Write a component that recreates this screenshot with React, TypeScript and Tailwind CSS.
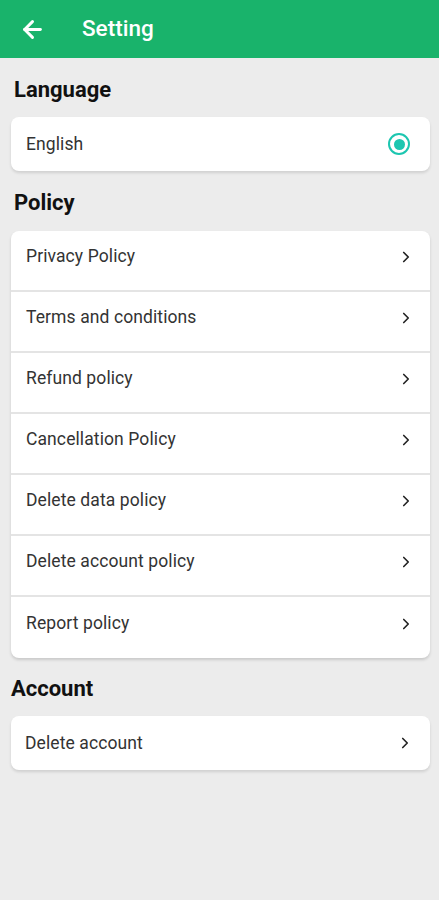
import { ArrowLeft, ChevronRight } from "lucide-react";

const policies = [
  "Privacy Policy",
  "Terms and conditions",
  "Refund policy",
  "Cancellation Policy",
  "Delete data policy",
  "Delete account policy",
  "Report policy",
];

function Row({ label, last }: { label: string; last?: boolean }) {
  return (
    <div
      className={
        "flex h-[61px] items-center justify-between pb-[8px] pl-[15px] pr-[15px] " +
        (last ? "" : "border-b-2 border-[#e4e4e4]")
      }
    >
      <span className="text-[17.5px] tracking-[0.1px] text-[#333]">{label}</span>
      <ChevronRight size={18} strokeWidth={2.2} className="text-[#222]" />
    </div>
  );
}

export default function App() {
  return (
    <div
      className="min-h-[900px] w-full bg-[#ececec]"
      style={{ fontFamily: "Roboto, 'Noto Sans', sans-serif" }}
    >
      {/* top bar */}
      <div className="flex h-[58px] items-center bg-[#19b36b] pl-[19px]">
        <ArrowLeft size={27} strokeWidth={2.6} className="text-white" />
        <span className="ml-[36px] text-[22.5px] font-medium text-white">Setting</span>
      </div>

      <div className="pl-[11px] pr-[9px]">
        <h2 className="mt-[18px] h-[28px] pl-[3px] text-[22px] font-bold leading-[28px] text-[#111]">
          Language
        </h2>
        <div className="mt-[13px] flex h-[54px] items-center justify-between rounded-lg bg-white pl-[15px] pr-[20px] shadow-[0_2px_3px_rgba(0,0,0,0.12)]">
          <span className="text-[17.5px] tracking-[0.1px] text-[#333]">English</span>
          <span className="flex h-[22px] w-[22px] items-center justify-center rounded-full border-[2.5px] border-[#1cc6b0]">
            <span className="h-[11px] w-[11px] rounded-full bg-[#1cc6b0]" />
          </span>
        </div>

        <h2 className="mt-[18px] h-[28px] pl-[3px] text-[22px] font-bold leading-[28px] text-[#111]">
          Policy
        </h2>
        <div className="mt-[14px] overflow-hidden rounded-lg bg-white shadow-[0_2px_3px_rgba(0,0,0,0.15)]">
          {policies.map((p, i) => (
            <Row key={p} label={p} last={i === policies.length - 1} />
          ))}
        </div>

        <h2 className="mt-[17px] h-[28px] text-[22px] font-bold leading-[28px] text-[#111]">
          Account
        </h2>
        <div className="mt-[13px] flex h-[54px] items-center justify-between rounded-lg bg-white pl-[14px] pr-[16px] shadow-[0_2px_3px_rgba(0,0,0,0.12)]">
          <span className="text-[17.5px] tracking-[0.1px] text-[#333]">Delete account</span>
          <ChevronRight size={18} strokeWidth={2.2} className="text-[#222]" />
        </div>
      </div>
    </div>
  );
}
